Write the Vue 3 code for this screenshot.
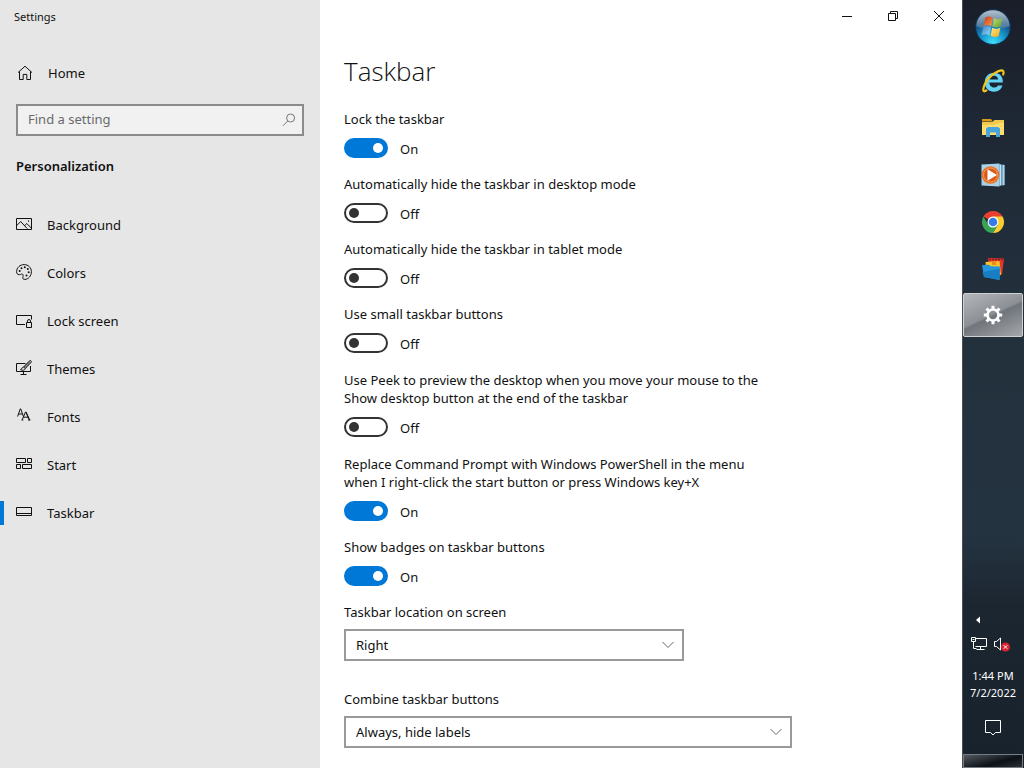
<script setup>
import { ref } from 'vue'

const nav = ['Background', 'Colors', 'Lock screen', 'Themes', 'Fonts', 'Start', 'Taskbar']
const current = ref('Taskbar')

const toggles = ref([
  { id: 'lock', label: 'Lock the taskbar', on: true },
  { id: 'hide-desktop', label: 'Automatically hide the taskbar in desktop mode', on: false },
  { id: 'hide-tablet', label: 'Automatically hide the taskbar in tablet mode', on: false },
  { id: 'small', label: 'Use small taskbar buttons', on: false },
  { id: 'peek', label: 'Use Peek to preview the desktop when you move your mouse to the Show desktop button at the end of the taskbar', on: false, long: true },
  { id: 'powershell', label: 'Replace Command Prompt with Windows PowerShell in the menu when I right-click the start button or press Windows key+X', on: true, long: true },
  { id: 'badges', label: 'Show badges on taskbar buttons', on: true },
])

const place = ref('Right')
const combine = ref('Always, hide labels')
</script>

<template>
  <div class="screen">
    <aside class="sidebar">
      <div class="app-name">Settings</div>
      <a class="home" href="#home">
        <svg width="16" height="16" viewBox="0 0 16 16" class="line"><path d="M1 7.6 8 1.2l7 6.4M2.5 6.5v8h3.7V9.4h3.6v5.1h3.7v-8" /></svg>
        <span>Home</span>
      </a>
      <div class="search">
        <input type="text" placeholder="Find a setting" aria-label="Find a setting" />
        <svg width="14" height="14" viewBox="0 0 14 14" class="line"><circle cx="8.6" cy="5" r="4" /><path d="M5.8 8 1 12.8" /></svg>
      </div>
      <h2>Personalization</h2>
      <nav>
        <a v-for="name in nav" :key="name" :href="'#' + name" :class="{ active: name === current }" @click.prevent="current = name">
          <svg width="16" height="16" viewBox="0 0 16 16" class="line">
            <template v-if="name === 'Background'">
              <path d="M.5 2.5h15v11H.5zM.5 9.8l4.2-4.3 6.6 7.2M8.6 9.7l2.2-2.2 4.7 4.8" />
              <circle cx="12.5" cy="5" r=".7" class="dot" />
            </template>
            <template v-else-if="name === 'Colors'">
              <path d="M.6 7.7C.7 3.5 4 .6 8.2.6c4 0 7.2 3 7.2 7.1 0 4.2-3.1 7.7-6.6 7.7-1.6 0-2.2-.8-2-2.1.3-1.5.7-2.4-.2-3.1-.9-.7-1.7.5-3.3.5C1.4 10.7.6 9.500.6 7.700z" />
              <g class="dot"><circle cx="3.7" cy="6.9" r="1" /><circle cx="5.5" cy="4.2" r="1" /><circle cx="8.8" cy="3.3" r="1" /><circle cx="11.8" cy="5" r="1" /><circle cx="12.7" cy="8.2" r="1" /><circle cx="10.5" cy="11.6" r="1" /></g>
            </template>
            <template v-else-if="name === 'Lock screen'">
              <path d="M9 12.5H.5v-9h15v4M10.500 10.500h5v5h-5zM11.500 10.500V9a1.500 1.500 0 0 1 3 0v1.500" />
            </template>
            <template v-else-if="name === 'Themes'">
              <path d="M9.500 3.500H.5v8h14V6M7.500 11.500v3M4.500 14.500h6" />
              <path class="brush" d="M14.200 1.500 8.500 7.500" />
              <path d="M15 .8c-.6-.5-1.300-.1-1.800.4L7.600 7l1.600 1.600 5.600-5.900c.5-.5.7-1.300.2-1.900zM7.600 7c-2 .2-1.300 2.200-3.100 2.600 2.200 1.200 4.500.7 4.700-1" />
            </template>
            <template v-else-if="name === 'Fonts'">
              <path d="m1.600 8.500 2.700-7.700h.4l2.700 7.700M2.500 6h4M6.200 11.800 9.500 4h.6l3.500 7.800M7.300 9.200h5M10 4.500l3 7" /><path d="M5.500 12h1.800M12 12h2.500" />
            </template>
            <template v-else-if="name === 'Start'">
              <path d="M.5 2.500h9v4h-9zM11.500 2.500h4v4h-4zM.5 8.500h4v4h-4zM6.500 8.500h9v4h-9z" />
            </template>
            <template v-else>
              <path d="M.5 3.500h15v8H.5zM.5 9.500h15" />
            </template>
          </svg>
          <span>{{ name }}</span>
        </a>
      </nav>
    </aside>

    <main class="content">
      <div class="window-controls">
        <button type="button" aria-label="Minimize"><svg width="12" height="12" viewBox="0 0 12 12" class="line"><path d="M1 6.500h10" /></svg></button>
        <button type="button" aria-label="Restore"><svg width="12" height="12" viewBox="0 0 12 12" class="line"><path d="M1.500 3.500h7v7h-7zM3.500 3.500v-2h7v7h-2" /></svg></button>
        <button type="button" aria-label="Close"><svg width="12" height="12" viewBox="0 0 12 12" class="line"><path d="m1 1 10 10M11 1 1 11" /></svg></button>
      </div>
      <form class="page" @submit.prevent>
        <h1>Taskbar</h1>
        <div v-for="t in toggles" :key="t.id" class="setting" :class="{ long: t.long }">
          <label :for="t.id">{{ t.label }}</label>
          <div class="toggle">
            <input :id="t.id" v-model="t.on" type="checkbox" role="switch" />
            <span>{{ t.on ? 'On' : 'Off' }}</span>
          </div>
        </div>
        <div class="field">
          <label for="place">Taskbar location on screen</label>
          <div class="dropdown">
            <select id="place" v-model="place">
              <option>Left</option><option>Top</option><option>Right</option><option>Bottom</option>
            </select>
            <svg width="14" height="14" viewBox="0 0 14 14" class="line"><path d="m1.500 4 5.500 5.500L12.500 4" /></svg>
          </div>
        </div>
        <div class="field">
          <label for="combine">Combine taskbar buttons</label>
          <div class="dropdown wide">
            <select id="combine" v-model="combine">
              <option>Always, hide labels</option><option>When taskbar is full</option><option>Never</option>
            </select>
            <svg width="14" height="14" viewBox="0 0 14 14" class="line"><path d="m1.500 4 5.500 5.500L12.500 4" /></svg>
          </div>
        </div>
      </form>
    </main>

    <div class="taskbar">
      <button type="button" class="start" aria-label="Start">
        <svg width="38" height="38" viewBox="0 0 38 38">
          <defs>
            <radialGradient id="orb" cx=".5" cy=".95" r=".9"><stop offset="0" stop-color="#3fe0fa" /><stop offset=".4" stop-color="#1596cc" /><stop offset=".7" stop-color="#14568c" /><stop offset="1" stop-color="#5b7694" /></radialGradient>
            <linearGradient id="shine" x1="0" y1="0" x2="0" y2="1"><stop offset="0" stop-color="#c3ced9" stop-opacity=".85" /><stop offset="1" stop-color="#8195ac" stop-opacity=".5" /></linearGradient>
            <linearGradient id="red" x1="0" y1="0" x2="1" y2="1"><stop offset="0" stop-color="#c93a12" /><stop offset="1" stop-color="#f79b51" /></linearGradient>
            <linearGradient id="green" x1="0" y1="0" x2="1" y2="1"><stop offset="0" stop-color="#c4dc6e" /><stop offset="1" stop-color="#5d9e2e" /></linearGradient>
            <linearGradient id="blue" x1="0" y1="0" x2="1" y2="1"><stop offset="0" stop-color="#3f86cd" /><stop offset="1" stop-color="#9cd8f2" /></linearGradient>
            <linearGradient id="gold" x1="0" y1="0" x2="1" y2="1"><stop offset="0" stop-color="#ffe98a" /><stop offset="1" stop-color="#f2a818" /></linearGradient>
          </defs>
          <circle cx="19" cy="19" r="17.500" fill="url(#orb)" stroke="#0d304d" />
          <path d="M2.500 18C3 8.500 10 2.500 19 2.500S35 8.500 35.500 18c-5 3-9 1-16 1s-12 2-17-1z" fill="url(#shine)" />
          <path d="M11.300 9.500c3-1.500 5-1.200 7.600.3L17.300 18c-2.600-1.300-4.900-1.500-7.800 0z" fill="url(#red)" />
          <path d="M20 10.300c3 1.500 5.300 1.500 8.400 0l-1.700 8c-3 1.500-5.300 1.400-8.200 0z" fill="url(#green)" />
          <path d="M9.200 19.200c3-1.500 5.300-1.300 7.900.2l-1.700 8c-2.500-1.500-4.900-1.500-7.700-.2z" fill="url(#blue)" />
          <path d="M18.200 19.800c3 1.500 5.200 1.500 8.200 0l-1.700 8.100c-3 1.500-5.200 1.300-8.100-.1z" fill="url(#gold)" />
        </svg>
      </button>

      <button type="button" class="app" aria-label="Internet Explorer">
        <svg width="26" height="26" viewBox="0 0 26 26">
          <path d="M22.800 14.500H9.300c.2 3.600 2.400 5 5 5 2 0 3-.7 3.700-2h4.500c-1.200 3.800-4.200 6.200-8.500 6.200-5.600 0-9.200-4-9.200-9.500s3.700-9.400 9.300-9.400c5.800 0 9 4 8.700 9.700zM9.500 11.400h8.700c-.3-2.300-1.900-3.700-4.200-3.700-2.400 0-4.100 1.400-4.500 3.700z" fill="#63d2f4" />
          <path d="M6.400 22.300c-6 4.500-2.700-7.500 4-13.700C17 2.400 25.700-.5 23.200 6.500" fill="none" stroke="#f5c51c" stroke-width="2.200" stroke-linecap="round" />
        </svg>
      </button>

      <button type="button" class="app" aria-label="File Explorer">
        <svg width="24" height="22" viewBox="0 0 24 22">
          <path d="M1 2h9l2 2.500H1z" fill="#d99a16" />
          <path d="M1 5h11l2-2h9v15H1z" fill="#fddc6b" />
          <path d="M1 5h10.500l2-2H23v2L12 8H1z" fill="#f2c94f" />
          <path d="M5 20v-8.500L7 10h10l2 1.500V20h-4v-4.500H9V20z" fill="#45a5dc" />
        </svg>
      </button>

      <button type="button" class="app" aria-label="Media Player">
        <svg width="26" height="26" viewBox="0 0 26 26">
          <path d="m17 2 8 1v20l-8 1z" fill="#6e9dbb" /><path d="M20.500 2.500v21M23.300 2.800v20.500" stroke="#c3e2f2" />
          <path d="m1.500 2.500 18-1v23l-18-1z" fill="#a8d1e9" />
          <circle cx="10.500" cy="13" r="8.800" fill="#ed701f" /><circle cx="10.500" cy="13" r="7" fill="#de581a" stroke="#f59b59" />
          <path d="M7.500 7.200v11.600L17 13z" fill="#fff" />
        </svg>
      </button>

      <button type="button" class="app" aria-label="Chrome">
        <svg width="24" height="24" viewBox="0 0 24 24">
          <path d="M12 12 2.470 6.500A11 11 0 0 1 21.530 6.500z" fill="#e8402f" />
          <path d="M12 6.500h9.530A11 11 0 0 1 12 23l4.760-8.250z" fill="#fccc2e" />
          <path d="M2.470 6.500A11 11 0 0 0 12 23l4.760-8.250L12 12l-4.760 2.750z" fill="#38a352" />
          <circle cx="12" cy="12" r="5.500" fill="#fff" /><circle cx="12" cy="12" r="4.300" fill="#347be8" />
        </svg>
      </button>

      <button type="button" class="app" aria-label="Folders">
        <svg width="24" height="24" viewBox="0 0 24 24">
          <path d="m7 1 16 .5-2 16L9 16z" fill="#e3372a" /><path d="M8 2.500h15" stroke="#8e1b1b" stroke-width="1.500" stroke-dasharray="2 1" />
          <path d="m4.500 5 14-1 1.500 14-14 1z" fill="#fbc02c" /><path d="m11 5 4-.3.2 3-4 .3z" fill="#e78a19" />
          <path d="m1 8 7-.3 1.500 1.500 9.500.3-.5 13.500L3 20z" fill="#2494dc" /><path d="m1.500 15 17.200-3-.2 11L3 20z" fill="#187ec4" />
        </svg>
      </button>

      <button type="button" class="app active" aria-label="Settings">
        <svg width="20" height="20" viewBox="0 0 20 20">
          <circle cx="10" cy="10" r="5.500" fill="none" stroke="#fff" stroke-width="2.600" />
          <path d="M10 .8v3.500M10 15.700v3.500M.8 10h3.500M15.700 10h3.500M3.500 3.500 6 6M14 14l2.500 2.500M16.500 3.500 14 6M6 14l-2.500 2.500" stroke="#fff" stroke-width="3" />
        </svg>
      </button>

      <div class="tray">
        <button type="button" class="more" aria-label="Show hidden icons"><svg width="6" height="8" viewBox="0 0 6 8"><path d="M5 .5v7L1 4z" fill="#fff" /></svg></button>
        <div class="status">
          <svg width="18" height="16" viewBox="0 0 18 16" class="line"><path d="M5.500 2.500h11v8h-11M10.500 10.500v3M6.500 13.500h8M1.500 1.500h4v4h-4zM3.500 5.500v7h3M2.500 3.500h2" /></svg>
          <svg width="18" height="16" viewBox="0 0 18 16" class="line"><path d="M1.500 5.500h2L7.500 2v12l-4-3.500h-2z" /><circle cx="12.500" cy="11" r="4.500" fill="#d9232e" stroke="none" /><path d="m10.700 9.200 3.600 3.600M14.300 9.200l-3.600 3.600" /></svg>
        </div>
        <div class="clock"><div>1:44 PM</div><div>7/2/2022</div></div>
        <button type="button" class="notes" aria-label="Notifications"><svg width="18" height="18" viewBox="0 0 18 18" class="line"><path d="M1.500 1.500h15v12h-5L9 16l-2.500-2.500h-5z" /></svg></button>
        <button type="button" class="peek" aria-label="Show desktop"></button>
      </div>
    </div>
  </div>
</template>

<style>
body {
  margin: 0;
}
</style>

<style scoped>
.screen {
  display: flex;
  min-height: 100vh;
  background: #fff;
  color: #111;
  font: 13px/18px "Noto Sans", "Open Sans", sans-serif;
}
* {
  box-sizing: border-box;
}
button {
  display: flex;
  align-items: center;
  justify-content: center;
  padding: 0;
  border: 0;
  background: none;
  color: inherit;
}
a {
  color: inherit;
  text-decoration: none;
}
svg {
  flex: none;
}
.line {
  fill: none;
  stroke: currentColor;
  stroke-width: 1;
}
.dot {
  fill: currentColor;
  stroke: none;
}
.brush {
  stroke: #888;
  stroke-width: 2;
}

.sidebar {
  flex: none;
  width: 320px;
  background: #e6e6e6;
}
.app-name {
  padding: 8px 14px;
  font-size: 11px;
}
.home {
  display: flex;
  align-items: center;
  gap: 15px;
  height: 48px;
  margin-top: 15px;
  padding-left: 17px;
}
.search {
  display: flex;
  align-items: center;
  height: 32px;
  margin: 7px 16px 0;
  padding: 0 6px 0 10px;
  border: 2px solid #8b8b8b;
  background: #f1f1f1;
  color: #777;
}
.search input {
  flex: 1;
  min-width: 0;
  padding: 0 0 2px;
  border: 0;
  outline: 0;
  background: none;
  color: #111;
  font: inherit;
}
.search input::placeholder {
  color: #6a6a6a;
  opacity: 1;
}
h2 {
  margin: 21px 16px 38px;
  font-size: 13px;
  font-weight: 600;
  line-height: 18px;
}
nav a {
  display: flex;
  align-items: center;
  gap: 15px;
  height: 24px;
  margin-bottom: 24px;
  padding-left: 16px;
}
nav svg {
  margin-bottom: 2px;
}
nav a.active {
  padding-left: 12px;
  border-left: 4px solid #0078d7;
}

.content {
  flex: 1;
  min-width: 0;
}
.window-controls {
  display: flex;
  justify-content: flex-end;
  height: 32px;
}
.window-controls button {
  width: 46px;
}
.page {
  padding: 20px 24px;
}
h1 {
  margin: 0 0 20px;
  font-family: "Open Sans", "Noto Sans", sans-serif;
  font-size: 26px;
  font-weight: 300;
  line-height: 38px;
}
.setting {
  margin-bottom: 17px;
}
.setting.long {
  padding-top: 1px;
}
label {
  display: block;
  max-width: 430px;
}
.toggle {
  display: flex;
  gap: 12px;
  height: 20px;
  margin-top: 10px;
}
.toggle span {
  padding-top: 2px;
}
.toggle input {
  display: flex;
  align-items: center;
  appearance: none;
  width: 44px;
  height: 20px;
  margin: 0;
  padding: 0 3px;
  border: 2px solid #333;
  border-radius: 10px;
}
.toggle input::before {
  content: "";
  width: 10px;
  height: 10px;
  border-radius: 50%;
  background: #333;
}
.toggle input:checked {
  justify-content: flex-end;
  border-color: #0078d7;
  background: #0078d7;
}
.toggle input:checked::before {
  background: #fff;
}
.field + .field {
  margin-top: 29px;
}
.dropdown {
  position: relative;
  max-width: 340px;
  margin-top: 8px;
}
.dropdown.wide {
  max-width: 448px;
}
.dropdown select {
  appearance: none;
  display: block;
  width: 100%;
  height: 32px;
  padding: 0 10px;
  border: 2px solid #999;
  border-radius: 0;
  background: #fff;
  color: inherit;
  font: inherit;
}
.dropdown svg {
  position: absolute;
  top: 9px;
  right: 9px;
  color: #666;
  pointer-events: none;
}

.taskbar {
  display: flex;
  flex: none;
  flex-direction: column;
  width: 62px;
  padding-right: 1px;
  border-left: 1px solid #4c5056;
  background: linear-gradient(#191e29, #202b38 22%, #23313d 45%, #243340 70%, #1c2631 79%, #18222d);
  color: #fff;
}
.start {
  height: 57px;
  padding-bottom: 3px;
}
.app {
  height: 47px;
}
.app.active {
  height: 44px;
  margin-top: 1px;
  border: 1px solid #cfd2d5;
  border-radius: 2px;
  background: linear-gradient(155deg, #b4b7bb, #8c9095 48%, #70757b 52%, #a5a8ac);
}
.tray {
  display: flex;
  flex-direction: column;
  margin-top: auto;
}
.more {
  width: 30px;
  height: 16px;
}
.status {
  display: flex;
  gap: 5px;
  margin-top: 8px;
  padding-left: 7px;
}
.clock {
  margin-top: 15px;
  font-size: 11px;
  line-height: 17px;
  text-align: center;
}
.notes {
  height: 53px;
}
.peek {
  height: 14px;
  border: 1px solid #777c82;
  background: linear-gradient(165deg, #555a60, #0c1117 60%, #2b3036);
}
</style>
